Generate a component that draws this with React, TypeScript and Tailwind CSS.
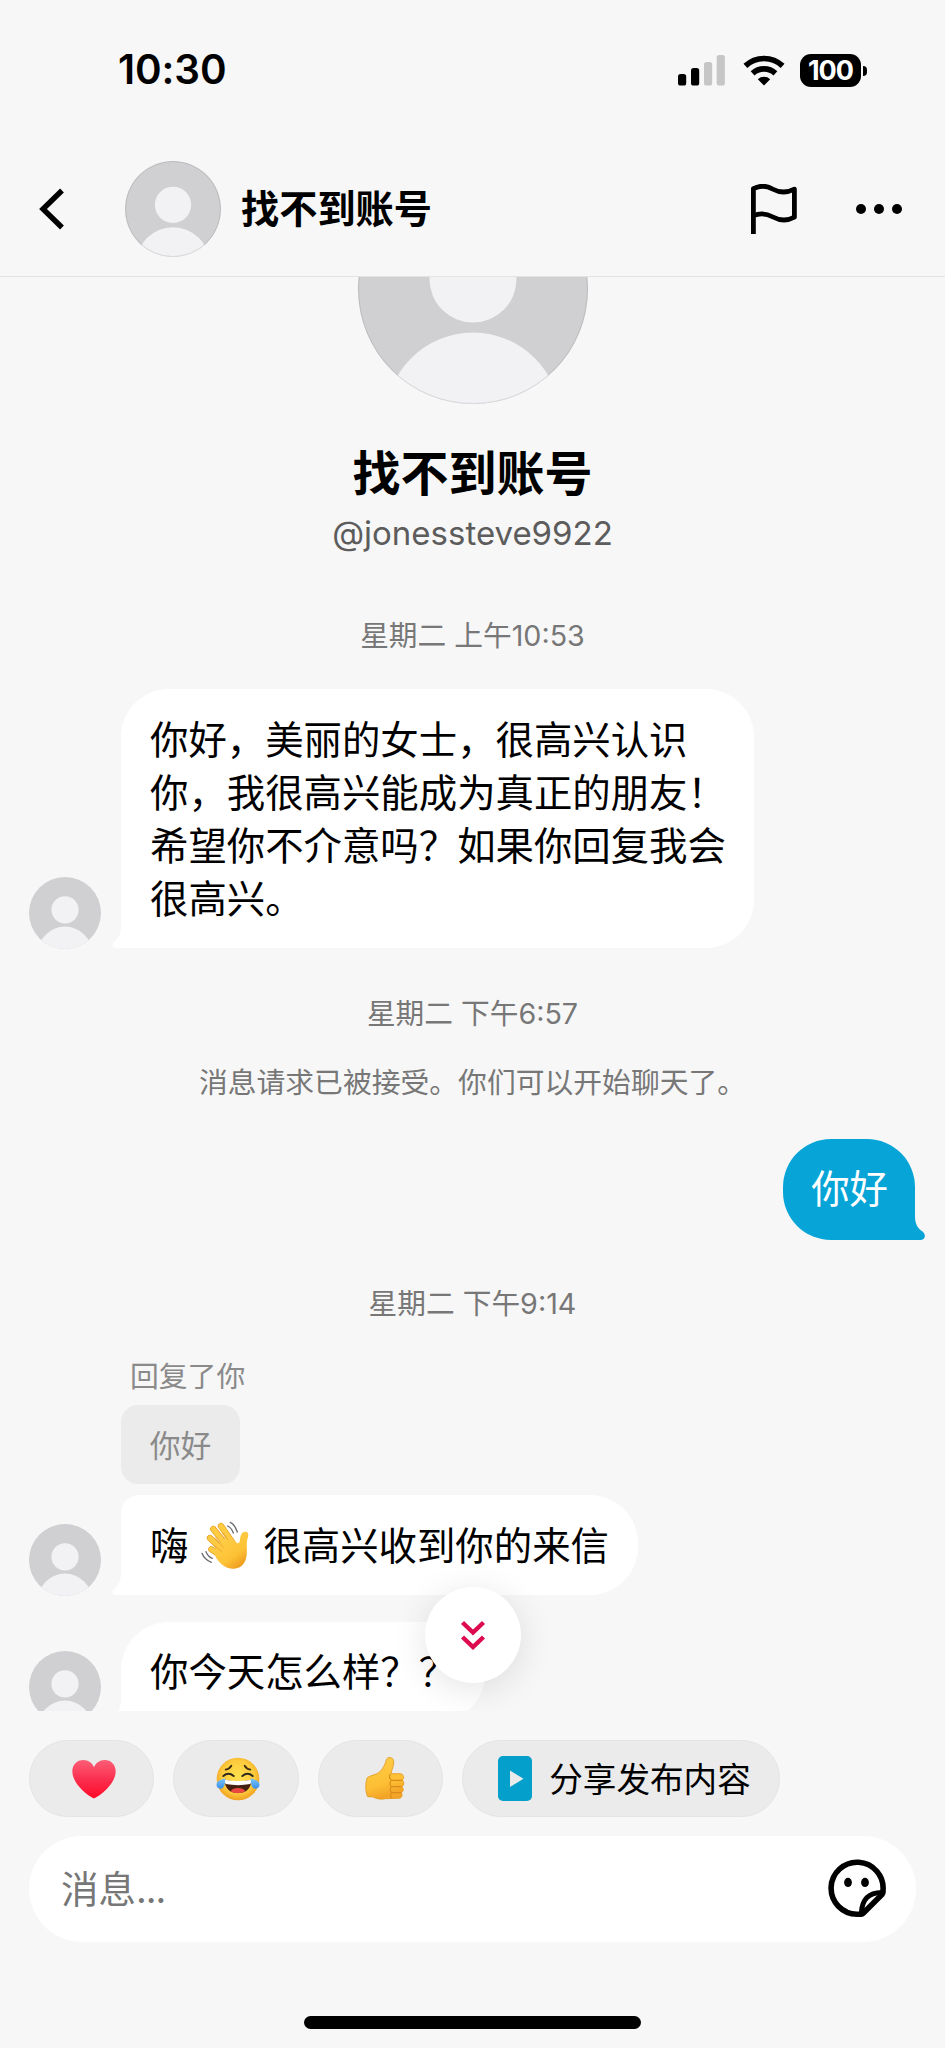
import type { ReactNode } from 'react'
import clsx from 'clsx'

interface AvatarProps {
  size: number
  className?: string
  bordered?: boolean
}

function Avatar({ size, className, bordered }: AvatarProps) {
  const clip = `avatar-clip-${size}`
  return (
    <svg width={size} height={size} viewBox="0 0 230 230" className={clsx('block shrink-0', className)}>
      <defs>
        <clipPath id={clip}>
          <circle cx="115" cy="115" r="115" />
        </clipPath>
      </defs>
      <g clipPath={`url(#${clip})`}>
        <rect width="230" height="230" fill="#d0d0d2" />
        <circle cx="115" cy="105" r="43.5" fill="#f2f2f5" />
        <circle cx="115" cy="246" r="87.5" fill="#f2f2f5" />
      </g>
      {bordered && (
        <circle cx="115" cy="115" r={115 - 115 / size} fill="none" stroke="#000" strokeOpacity="0.1" strokeWidth={230 / size} />
      )}
    </svg>
  )
}

function SignalIcon() {
  return (
    <svg width="48" height="31" viewBox="0 0 48 31" className="block">
      <rect x="0" y="19" width="8.2" height="11.5" rx="2.6" fill="#000" />
      <rect x="13" y="13" width="8.2" height="17.5" rx="2.6" fill="#000" />
      <rect x="26" y="7" width="8.2" height="23.5" rx="2.6" fill="#c6c6c6" />
      <rect x="38.7" y="0" width="8.2" height="30.5" rx="2.6" fill="#c6c6c6" />
    </svg>
  )
}

function WifiIcon() {
  return (
    <svg width="42" height="31" viewBox="0 0 42 31" className="block">
      <g fill="none" stroke="#000" strokeWidth="5.6">
        <path d="M2.4 10.9A27 27 0 0 1 39.6 10.9" />
        <path d="M9.6 18.4A16.6 16.6 0 0 1 32.4 18.4" />
      </g>
      <path d="M21 30.4l-6.2-6.2a9 9 0 0 1 12.4 0z" fill="#000" />
    </svg>
  )
}

function FlagIcon() {
  return (
    <svg width="46" height="50" viewBox="0 0 46 50" className="block">
      <path
        d="M2.4 47.6V4.6C8 1.8 15.5 1.5 21.5 5C28 8.6 35 9.5 43.4 5.2V33.2C36 37.2 28.5 36.6 22 33C15.5 29.4 9 28.8 2.4 31.6"
        fill="none"
        stroke="#000"
        strokeWidth="4.8"
        strokeLinejoin="round"
        strokeLinecap="square"
      />
    </svg>
  )
}

function StickerIcon() {
  return (
    <svg width="60" height="60" viewBox="0 0 60 60" className="block">
      <path
        d="M55 31.5A26 26 0 1 0 29 55.2H33.2C34 55.2 34.6 54.9 35.2 54.3L54.2 35.2C54.9 34.4 55.2 33.6 55 31.5Z"
        fill="none"
        stroke="#000"
        strokeWidth="5.6"
        strokeLinejoin="round"
      />
      <path d="M33.4 54.5C33.8 41 39.5 33.8 54 33.6" fill="none" stroke="#000" strokeWidth="5" />
      <ellipse cx="20" cy="23.4" rx="3.9" ry="4.6" fill="#000" />
      <ellipse cx="37" cy="23.4" rx="3.9" ry="4.6" fill="#000" />
    </svg>
  )
}

function WaveEmoji() {
  const fingers = 'M98 85L142 140M121 76L158 130M88 112L132 155M92 146L134 172'
  return (
    <svg width="50" height="50" viewBox="58 58 150 150" className="block">
      <defs>
        <linearGradient id="wave" x1="0" y1="0" x2="0.7" y2="1">
          <stop offset="0" stopColor="#ffd350" />
          <stop offset="0.7" stopColor="#fdc236" />
          <stop offset="1" stopColor="#ee9b1e" />
        </linearGradient>
      </defs>
      <g fill="none" strokeLinecap="round">
        <path d={fingers} stroke="#e59a1c" strokeWidth="19" />
        <path d={fingers} stroke="#fecb43" strokeWidth="15" />
      </g>
      <path
        d="M128 118C140 110 155 113 165 124C172 131 177 128 178 117C179 104 183 94 193 93C203 93 205 101 201 113C196 128 200 142 198 162C196 186 183 202 160 204C140 206 120 192 106 171C96 154 112 130 128 118Z"
        fill="url(#wave)"
      />
      <path d="M104 111L128 141M127 97L142 118M102 135L124 153" stroke="#e9a324" strokeWidth="2.5" strokeLinecap="round" fill="none" />
      <g fill="none" stroke="#6b6b70" strokeWidth="4" strokeLinecap="round">
        <path d="M149 65Q164 73 170 94M141 76Q153 82 158 97" />
        <path d="M64 158Q72 178 92 185M76 153Q82 168 95 173" />
      </g>
    </svg>
  )
}

function HeartEmoji() {
  return (
    <svg width="44" height="40" viewBox="0 0 132 118" className="block">
      <defs>
        <linearGradient id="heart" x1="0" y1="0" x2="0" y2="1">
          <stop offset="0" stopColor="#fd5e76" />
          <stop offset="0.5" stopColor="#fb2f50" />
          <stop offset="1" stopColor="#ff0a28" />
        </linearGradient>
      </defs>
      <path
        d="M66 117C58 116 1 78 1 36C1 16 15 2 34 2C49 2 61 11 66 24C71 11 83 2 98 2C117 2 131 16 131 36C131 78 74 116 66 117Z"
        fill="url(#heart)"
      />
    </svg>
  )
}

function JoyEmoji() {
  return (
    <svg width="44" height="44" viewBox="0 0 132 132" className="block">
      <defs>
        <radialGradient id="joy" cx="0.5" cy="0.45" r="0.55">
          <stop offset="0" stopColor="#ffe04d" />
          <stop offset="0.7" stopColor="#fdcb3d" />
          <stop offset="1" stopColor="#f0a020" />
        </radialGradient>
        <linearGradient id="tear" x1="0" y1="0" x2="0" y2="1">
          <stop offset="0" stopColor="#7cc6fb" />
          <stop offset="1" stopColor="#3b8fe8" />
        </linearGradient>
      </defs>
      <circle cx="66" cy="66" r="64" fill="url(#joy)" />
      <g fill="none" strokeLinecap="round">
        <path d="M29 38Q40 36 46 26M103 38Q92 36 86 26" stroke="#3f2a12" strokeWidth="5.5" />
        <path d="M22 57Q37 44 53 57M79 57Q95 44 110 57" stroke="#2b2a1c" strokeWidth="6" />
      </g>
      <path d="M26 68Q66 78 106 68C106 94 90 108 66 108C42 108 26 94 26 68Z" fill="#43200f" />
      <path d="M26 68Q66 76 106 68Q107 76 103 81Q66 88 29 81Q25 76 26 68Z" fill="#fff" />
      <path d="M44 103Q50 93 66 93Q82 93 88 103Q79 109 66 109Q53 109 44 103Z" fill="#ec4842" />
      <path d="M28 64C27 84 25 95 13 95C3 95 -1 85 3 77C7 69 18 68 28 64Z" fill="url(#tear)" />
      <path d="M104 64C105 84 107 95 119 95C129 95 133 85 129 77C125 69 114 68 104 64Z" fill="url(#tear)" />
    </svg>
  )
}

function ThumbEmoji() {
  return (
    <svg width="40" height="43" viewBox="0 0 120 129" className="block">
      <defs>
        <linearGradient id="thumb" x1="0" y1="0" x2="0.3" y2="1">
          <stop offset="0" stopColor="#ffcf4a" />
          <stop offset="0.7" stopColor="#fdbf35" />
          <stop offset="1" stopColor="#f3a426" />
        </linearGradient>
      </defs>
      <path
        d="M7 62C17 54 36 54 46 43C56 32 61 20 64 8C67 -1 84 -1 86 11C88 25 80 38 78 50H107C117 51 119 66 111 70C119 74 118 86 110 89C117 93 116 104 109 107C113 112 112 123 102 124L62 125C50 128 32 126 25 120L8 119C0 104 1 73 7 62Z"
        fill="url(#thumb)"
        stroke="#e39a20"
        strokeWidth="2.5"
      />
      <path
        d="M76 51C72 58 74 66 80 70H112M80 70C74 74 73 85 80 89H111M80 89C75 93 74 103 80 107H109M80 107C75 111 76 120 81 124"
        fill="none"
        stroke="#d98d18"
        strokeWidth="3.5"
      />
    </svg>
  )
}

function LeftTail() {
  return (
    <svg width="24" height="22" viewBox="0 0 24 22" className="absolute bottom-0 -left-[9px] block">
      <path d="M9 0C9 8 6.500 12 2.200 15.500C-1 18.500 0.500 22 4 22H24V0Z" fill="#fff" />
    </svg>
  )
}

interface IncomingProps {
  children: ReactNode
  className?: string
}

function Incoming({ children, className }: IncomingProps) {
  return (
    <div className="flex items-end pl-[29px]">
      <Avatar size={72} className="mr-5 -mb-px" />
      <div className={clsx('relative bg-white text-[38.4px] leading-[53px] text-black', className)}>
        <LeftTail />
        <div className="relative">{children}</div>
      </div>
    </div>
  )
}

function Timestamp({ children }: { children: ReactNode }) {
  return <p className="pt-px text-center text-[28.7px] leading-[39px] text-[#777]">{children}</p>
}

const CHIP = 'flex h-[77px] items-center justify-center rounded-full border border-[#e4e4e4] bg-[#ebebeb]'

export default function App() {
  return (
    <div className="flex h-[2048px] w-[945px] flex-col overflow-hidden bg-[#f7f7f7] font-[Inter,'Noto_Sans_CJK_SC',sans-serif]">
      {/* status bar */}
      <div className="flex h-[141px] shrink-0 items-center justify-between pr-[78px] pl-[118px]">
        <span className="text-[40.4px] font-semibold tracking-[-0.1px] text-black">10:30</span>
        <div className="flex items-center">
          <SignalIcon />
          <div className="ml-[17px]">
            <WifiIcon />
          </div>
          <div className="ml-[15px] flex h-[33px] w-[61px] items-center justify-center rounded-[11px] bg-black text-[27px] leading-none font-bold tracking-[-1px] text-white">
            100
          </div>
          <div className="ml-[2px] h-[10px] w-[4px] rounded-r-full bg-black" />
        </div>
      </div>

      {/* chat header */}
      <div className="flex h-[136px] shrink-0 items-center border-b border-[#e3e3e4] pr-[43px] pl-[39px]">
        <svg width="26" height="42" viewBox="0 0 26 42" className="block">
          <path d="M23 2.500L4 21L23 39.500" fill="none" stroke="#000" strokeWidth="5.400" />
        </svg>
        <Avatar size={96} bordered className="ml-[60px]" />
        <h1 className="ml-[20px] flex-1 pt-[2px] text-[38.2px] font-bold text-black">找不到账号</h1>
        <FlagIcon />
        <div className="ml-[59px] flex gap-2">
          <i className="size-[10px] rounded-full bg-black" />
          <i className="size-[10px] rounded-full bg-black" />
          <i className="size-[10px] rounded-full bg-black" />
        </div>
      </div>

      {/* conversation */}
      <div className="relative h-[1434px] shrink-0 overflow-hidden">
        <div className="-mt-[103px] flex flex-col items-center">
          <Avatar size={230} bordered />
          <h2 className="mt-[38px] text-[48px] leading-[64px] font-bold text-black">找不到账号</h2>
          <p className="mt-[3px] text-[33px] leading-[48px] text-[#5c5c5c]">@jonessteve9922</p>
        </div>

        <div className="mt-[58px]">
          <Timestamp>星期二 上午10:53</Timestamp>
        </div>
        <div className="mt-[34px]">
          <Incoming className="w-[633px] rounded-[48px] rounded-bl-none pt-[25px] pb-[22px] pl-[29px]">
            你好，美丽的女士，很高兴认识
            <br />
            你，我很高兴能成为真正的朋友！
            <br />
            希望你不介意吗？如果你回复我会
            <br />
            很高兴。
          </Incoming>
        </div>

        <div className="mt-[45px]">
          <Timestamp>星期二 下午6:57</Timestamp>
        </div>
        <p className="mt-[29px] pt-px text-center text-[28.8px] leading-[39px] text-[#777]">消息请求已被接受。你们可以开始聊天了。</p>

        <div className="mt-[37px] flex justify-end pr-[30px]">
          <div className="relative h-[101px] rounded-[48px] rounded-br-none bg-[#07a4d7] pt-[24px] pr-[27px] pl-[28px] text-[38.4px] leading-[53px] text-white">
            <svg width="34" height="24" viewBox="0 0 34 24" className="absolute -right-[10px] bottom-0 block">
              <path d="M24 0C24 8 26.500 12 31.500 15.500C35.500 19 34 24 30 24H0V0Z" fill="#07a4d7" />
            </svg>
            <span className="relative">你好</span>
          </div>
        </div>

        <div className="mt-[43px]">
          <Timestamp>星期二 下午9:14</Timestamp>
        </div>

        <p className="mt-[33px] ml-[130px] pt-px text-[28.8px] leading-[39px] text-[#8a8a8a]">回复了你</p>
        <div className="mt-[9px] ml-[121px] flex h-[79px] w-[119px] items-center justify-center rounded-[17px] bg-[#ebebeb] pt-[3px] text-[30.8px] text-[#8a8a8a]">
          你好
        </div>

        <div className="mt-[11px]">
          <Incoming className="h-[100px] w-[517px] rounded-[48px] rounded-tl-[18px] rounded-bl-none pt-[25px] pl-[29px]">
            <div className="flex items-center whitespace-nowrap">
              嗨
              <span className="mr-[13px] ml-[12px] -mt-[3px]">
                <WaveEmoji />
              </span>
              很高兴收到你的来信
            </div>
          </Incoming>
        </div>

        <div className="mt-[27px]">
          <Incoming className="h-[100px] w-[364px] rounded-[48px] rounded-bl-none pt-[24px] pl-[29px] whitespace-nowrap">
            你今天怎么样？？
          </Incoming>
        </div>

        {/* scroll to latest */}
        <button className="absolute top-[1310px] left-[425px] flex size-[96px] items-center justify-center rounded-full bg-white shadow-[0_6px_36px_rgba(0,0,0,0.11)]">
          <svg width="26" height="30" viewBox="0 0 26 30" className="block">
            <path d="M2.500 2.500L13 12.500L23.500 2.500M2.500 17L13 27L23.500 17" fill="none" stroke="#dd0a50" strokeWidth="4.400" />
          </svg>
        </button>
      </div>

      {/* quick replies */}
      <div className="mt-[29px] flex shrink-0 gap-[19px] pl-[29px]">
        <div className={clsx(CHIP, 'w-[125px] pl-[5px]')}>
          <HeartEmoji />
        </div>
        <div className={clsx(CHIP, 'w-[126px] pl-[4px]')}>
          <JoyEmoji />
        </div>
        <div className={clsx(CHIP, 'w-[125px] pl-[8px]')}>
          <ThumbEmoji />
        </div>
        <div className={clsx(CHIP, 'w-[318px] pl-[7px]')}>
          <svg width="34" height="45" viewBox="0 0 34 45" className="block">
            <rect width="34" height="45" rx="5" fill="#049fcb" />
            <path d="M12 14.500V31L25.500 22.700Z" fill="#ebebeb" />
          </svg>
          <span className="ml-[17px] pt-[2px] text-[33.6px] leading-none text-black">分享发布内容</span>
        </div>
      </div>

      {/* message input */}
      <div className="mx-[29px] mt-[19px] flex h-[106px] shrink-0 items-center justify-between rounded-full bg-white pr-[28px] pl-[32px]">
        <span className="pt-[2px] text-[37.5px] text-[#777]">
          消息<span className="tracking-[-1px]">...</span>
        </span>
        <StickerIcon />
      </div>

      <div className="mx-auto mt-[74px] h-[13px] w-[337px] shrink-0 rounded-full bg-black" />
    </div>
  )
}
